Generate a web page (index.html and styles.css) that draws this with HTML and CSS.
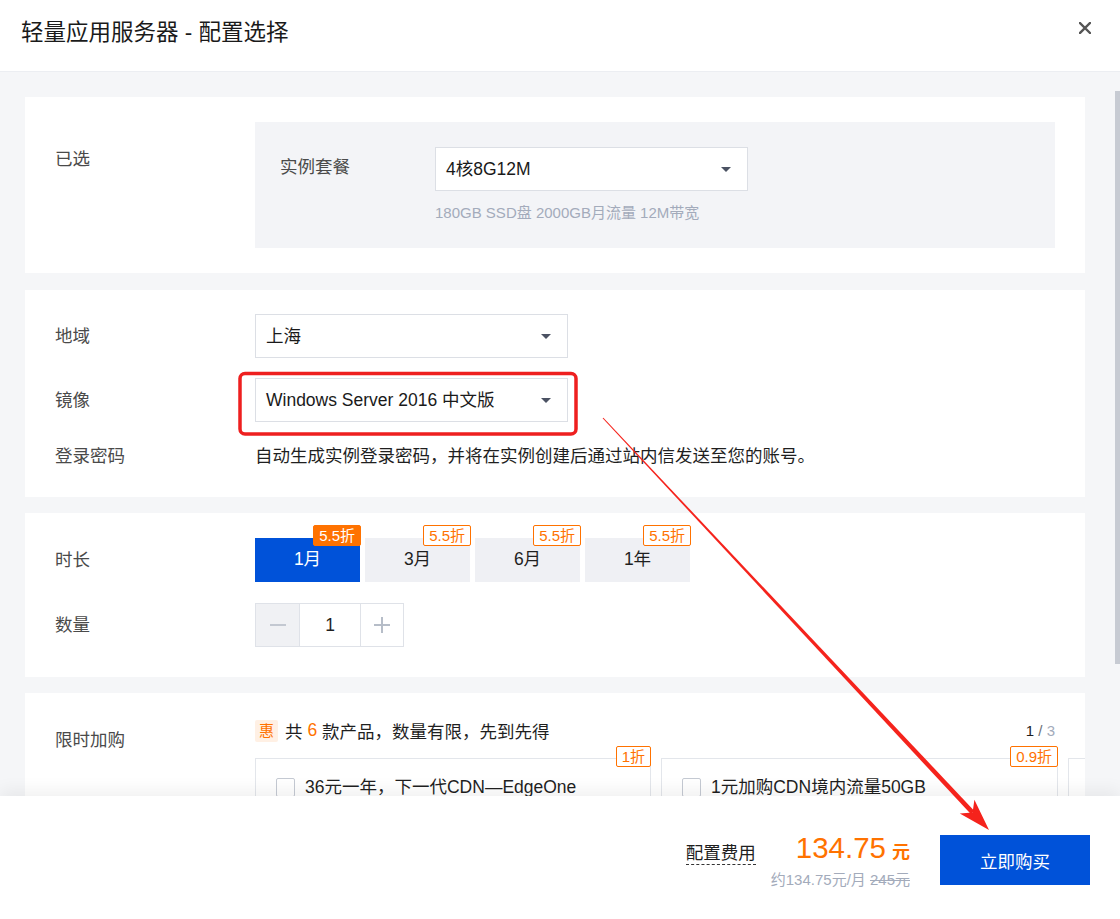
FILE: index.html
```html
<!DOCTYPE html>
<html lang="zh-CN">
<head>
<meta charset="utf-8">
<title>轻量应用服务器 - 配置选择</title>
<link rel="stylesheet" href="styles.css">
</head>
<body>
<div class="modal">
  <header class="header">
    <h1 class="title">轻量应用服务器 - 配置选择</h1>
    <button class="close" aria-label="关闭">
      <svg width="12" height="12" viewBox="0 0 12 12"><path d="M1 1L11 11M11 1L1 11" stroke="#555" stroke-width="2.4" stroke-linecap="square"/></svg>
    </button>
  </header>

  <main class="body">
    <section class="card card-selected">
      <div class="label label-selected">已选</div>
      <div class="content">
        <div class="selected-box">
          <div class="sel-label">实例套餐</div>
          <div class="sel-col">
            <div class="select">4核8G12M<span class="caret"></span></div>
            <div class="hint">180GB SSD盘 2000GB月流量 12M带宽</div>
          </div>
        </div>
      </div>
    </section>

    <section class="card card-region">
      <div class="row">
        <div class="label label-44">地域</div>
        <div class="select">上海<span class="caret"></span></div>
      </div>
      <div class="row row-image">
        <div class="label label-44">镜像</div>
        <div class="select">Windows Server 2016 中文版<span class="caret"></span></div>
      </div>
      <div class="row row-pass">
        <div class="label">登录密码</div>
        <div class="text">自动生成实例登录密码，并将在实例创建后通过站内信发送至您的账号。</div>
      </div>
    </section>

    <section class="card card-duration">
      <div class="row">
        <div class="label label-44">时长</div>
        <div class="periods">
          <div class="period active">1月<span class="badge filled">5.5折</span></div>
          <div class="period">3月<span class="badge">5.5折</span></div>
          <div class="period">6月<span class="badge">5.5折</span></div>
          <div class="period">1年<span class="badge">5.5折</span></div>
        </div>
      </div>
      <div class="row row-qty">
        <div class="label label-44">数量</div>
        <div class="stepper">
          <div class="step minus"><span class="bar"></span></div>
          <div class="step-value">1</div>
          <div class="step plus"><span class="bar"></span><span class="bar vert"></span></div>
        </div>
      </div>
    </section>

    <section class="card card-addon">
      <div class="label label-addon">限时加购</div>
      <div class="content">
        <div class="addon-head">
          <div class="addon-title"><span class="hui">惠</span>共 <em class="num">6</em> 款产品，数量有限，先到先得</div>
          <div class="pager"><span class="cur">1</span> <span class="slash">/</span> <span class="total">3</span></div>
        </div>
        <div class="products">
          <div class="product">
            <span class="badge">1折</span>
            <span class="checkbox"></span>
            <span class="p-name">36元一年，下一代CDN—EdgeOne</span>
          </div>
          <div class="product">
            <span class="badge">0.9折</span>
            <span class="checkbox"></span>
            <span class="p-name">1元加购CDN境内流量50GB</span>
          </div>
          <div class="product product-peek"></div>
        </div>
      </div>
    </section>
  </main>

  <footer class="footer">
    <div class="fee-label">配置费用</div>
    <div class="price-block">
      <div class="price"><span class="amount">134.75</span><span class="unit">元</span></div>
      <div class="sub">约134.75元/月 <s>245元</s></div>
    </div>
    <button class="buy">立即购买</button>
  </footer>

  <div class="scrollbar"></div>

  <svg class="annotation" width="1120" height="919" viewBox="0 0 1120 919">
    <rect x="240" y="373.5" width="336" height="60.5" rx="5" fill="none" stroke="#ee1f1f" stroke-width="3.5"/>
    <polygon points="602.6,418.3 603.4,417.7 974.4,810.9 970.8,814.1" fill="#f5231c"/>
    <polygon points="989,830 959.8,813.4 972.6,812.5 974.4,799.8" fill="#f5231c"/>
  </svg>
</div>
</body>
</html>
```

FILE: styles.css
```css
* { box-sizing: border-box; }

html, body {
  margin: 0;
  padding: 0;
  width: 1120px;
  height: 919px;
  overflow: hidden;
  background: #fff;
}

body {
  font-family: "Liberation Sans", "Noto Sans CJK SC", sans-serif;
  font-size: 17.5px;
  color: #1f1f1f;
}

.modal {
  position: relative;
  width: 1120px;
  height: 919px;
  display: flex;
  flex-direction: column;
  background: #fff;
}

/* header */
.header {
  height: 72px;
  flex: none;
  display: flex;
  justify-content: space-between;
  align-items: flex-start;
  padding: 0 29px 0 21px;
  border-bottom: 1px solid #eceef2;
}

.title {
  margin: 18px 0 0;
  font-size: 22.5px;
  font-weight: normal;
  line-height: 30px;
  color: #1a1a1a;
}

.close {
  margin-top: 22px;
  padding: 0;
  width: 12px;
  height: 12px;
  border: 0;
  background: none;
  display: flex;
}

/* body */
.body {
  flex: 1;
  min-height: 0;
  overflow: hidden;
  background: #f5f6f8;
  padding: 25px 35px 0 25px;
  display: flex;
  flex-direction: column;
  gap: 16px;
}

.card {
  flex: none;
  background: #fff;
  padding: 25px 30px;
}

.card-selected {
  display: flex;
  margin-bottom: 1px;
}

.label {
  width: 200px;
  flex: none;
  color: #4a4a4a;
  line-height: 24px;
}

.label-44 { line-height: 44px; }
.label-selected { padding-top: 25px; }
.label-addon { padding-top: 10px; }

.content { flex: 1; min-width: 0; }

.selected-box {
  background: #f3f4f7;
  padding: 25px;
  display: flex;
}

.sel-label {
  width: 155px;
  flex: none;
  color: #4a4a4a;
  line-height: 40px;
}

.select {
  position: relative;
  width: 313px;
  height: 44px;
  border: 1px solid #dcdfe5;
  background: #fff;
  padding-left: 10px;
  line-height: 42px;
  color: #1a1a1a;
}

.caret {
  position: absolute;
  right: 16px;
  top: 19px;
  width: 0;
  height: 0;
  border-left: 5px solid transparent;
  border-right: 5px solid transparent;
  border-top: 5px solid #4b5263;
}

.hint {
  margin-top: 12px;
  font-size: 15px;
  line-height: 20px;
  color: #a3abbb;
}

.row { display: flex; }

.card-region { padding: 24px 30px 28px; }
.row-image { margin-top: 20px; }
.row-pass { margin-top: 22px; }
.row-pass .text { line-height: 26px; margin-top: -1px; }

/* duration */
.card-duration { padding: 25px 30px 30px; }

.periods { display: flex; gap: 5px; }

.period {
  position: relative;
  width: 105px;
  height: 44px;
  background: #eff0f4;
  color: #1f1f1f;
  text-align: center;
  line-height: 42px;
}

.period.active {
  background: #0052d9;
  color: #fff;
}

.badge {
  position: absolute;
  top: -13px;
  right: -1px;
  height: 21px;
  padding: 0 5px;
  border: 1px solid #ff7200;
  border-radius: 2px;
  background: #fff;
  color: #ff7200;
  font-size: 15px;
  line-height: 19px;
  white-space: nowrap;
}

.badge.filled {
  background: #ff7200;
  color: #fff;
}

.row-qty { margin-top: 21px; }

.stepper {
  display: flex;
  height: 44px;
  border: 1px solid #dfe2e8;
}

.step {
  position: relative;
  width: 44px;
  height: 42px;
  background: #fff;
}

.step.minus {
  width: 44px;
  background: #f0f1f4;
  border-right: 1px solid #dfe2e8;
}

.step.plus {
  width: 43px;
  border-left: 1px solid #dfe2e8;
}

.bar {
  position: absolute;
  left: 14px;
  top: 20px;
  width: 16px;
  height: 2px;
  background: #c3c8d1;
}

.plus .bar { left: 13px; background: #b6bdc8; }
.plus .bar.vert { left: 20px; top: 13px; width: 2px; height: 16px; }

.step-value {
  width: 60px;
  text-align: center;
  line-height: 42px;
}

/* addon */
.card-addon {
  display: flex;
  padding: 25px 30px 25px;
  height: 300px;
}

.addon-head {
  display: flex;
  justify-content: space-between;
  align-items: center;
  height: 25px;
}

.addon-title { display: flex; align-items: center; white-space: pre; }

.hui {
  display: inline-block;
  width: 23px;
  height: 22px;
  margin-right: 7px;
  background: #fff0e4;
  color: #ff7200;
  border-radius: 2px;
  font-size: 15px;
  line-height: 22px;
  text-align: center;
}

.num { font-style: normal; color: #ff7200; }

.pager { font-size: 15px; white-space: pre; }
.pager .cur { color: #1f1f1f; }
.pager .slash { color: #6b6f78; }
.pager .total { color: #a3abbb; }

.products {
  display: flex;
  gap: 10px;
  margin-top: 3px;
  padding-top: 12px;
  margin-right: -30px;
  overflow: hidden;
}

.product {
  position: relative;
  flex: none;
  width: 396px;
  height: 120px;
  border: 1px solid #e3e6eb;
  padding: 18px 20px;
  display: flex;
  align-items: flex-start;
}

.product:nth-child(2) { width: 397px; }

.checkbox {
  width: 19px;
  height: 19px;
  border: 1px solid #c5cad3;
  border-radius: 2px;
  margin-top: 1px;
  flex: none;
}

.p-name {
  margin-left: 10px;
  line-height: 20px;
  white-space: nowrap;
}

/* footer */
.footer {
  position: relative;
  z-index: 1;
  flex: none;
  height: 123px;
  background: #fff;
  box-shadow: 0 -6px 16px rgba(0, 0, 0, 0.06);
  display: flex;
  justify-content: flex-end;
  align-items: center;
  padding-right: 30px;
}

.fee-label {
  line-height: 22px;
  border-bottom: 1px dashed #333;
  color: #1f1f1f;
  margin-right: 15px;
  margin-bottom: 8px;
}

.price-block {
  text-align: right;
  margin-right: 30px;
  margin-top: 6px;
}

.price {
  line-height: 34px;
  color: #ff7200;
}

.amount { font-size: 29.5px; }

.unit {
  font-size: 18px;
  font-weight: bold;
  margin-left: 6px;
}

.sub {
  font-size: 15px;
  line-height: 22px;
  color: #a3abbb;
}

.buy {
  width: 150px;
  height: 50px;
  margin-top: 5px;
  border: 0;
  background: #0052d9;
  color: #fff;
  font-family: inherit;
  font-size: 17.5px;
}

/* overlays */
.scrollbar {
  position: absolute;
  right: 0;
  top: 91px;
  width: 5px;
  height: 573px;
  background: #c7cbd3;
}

.annotation {
  position: absolute;
  left: 0;
  top: 0;
  pointer-events: none;
  z-index: 5;
}
```
